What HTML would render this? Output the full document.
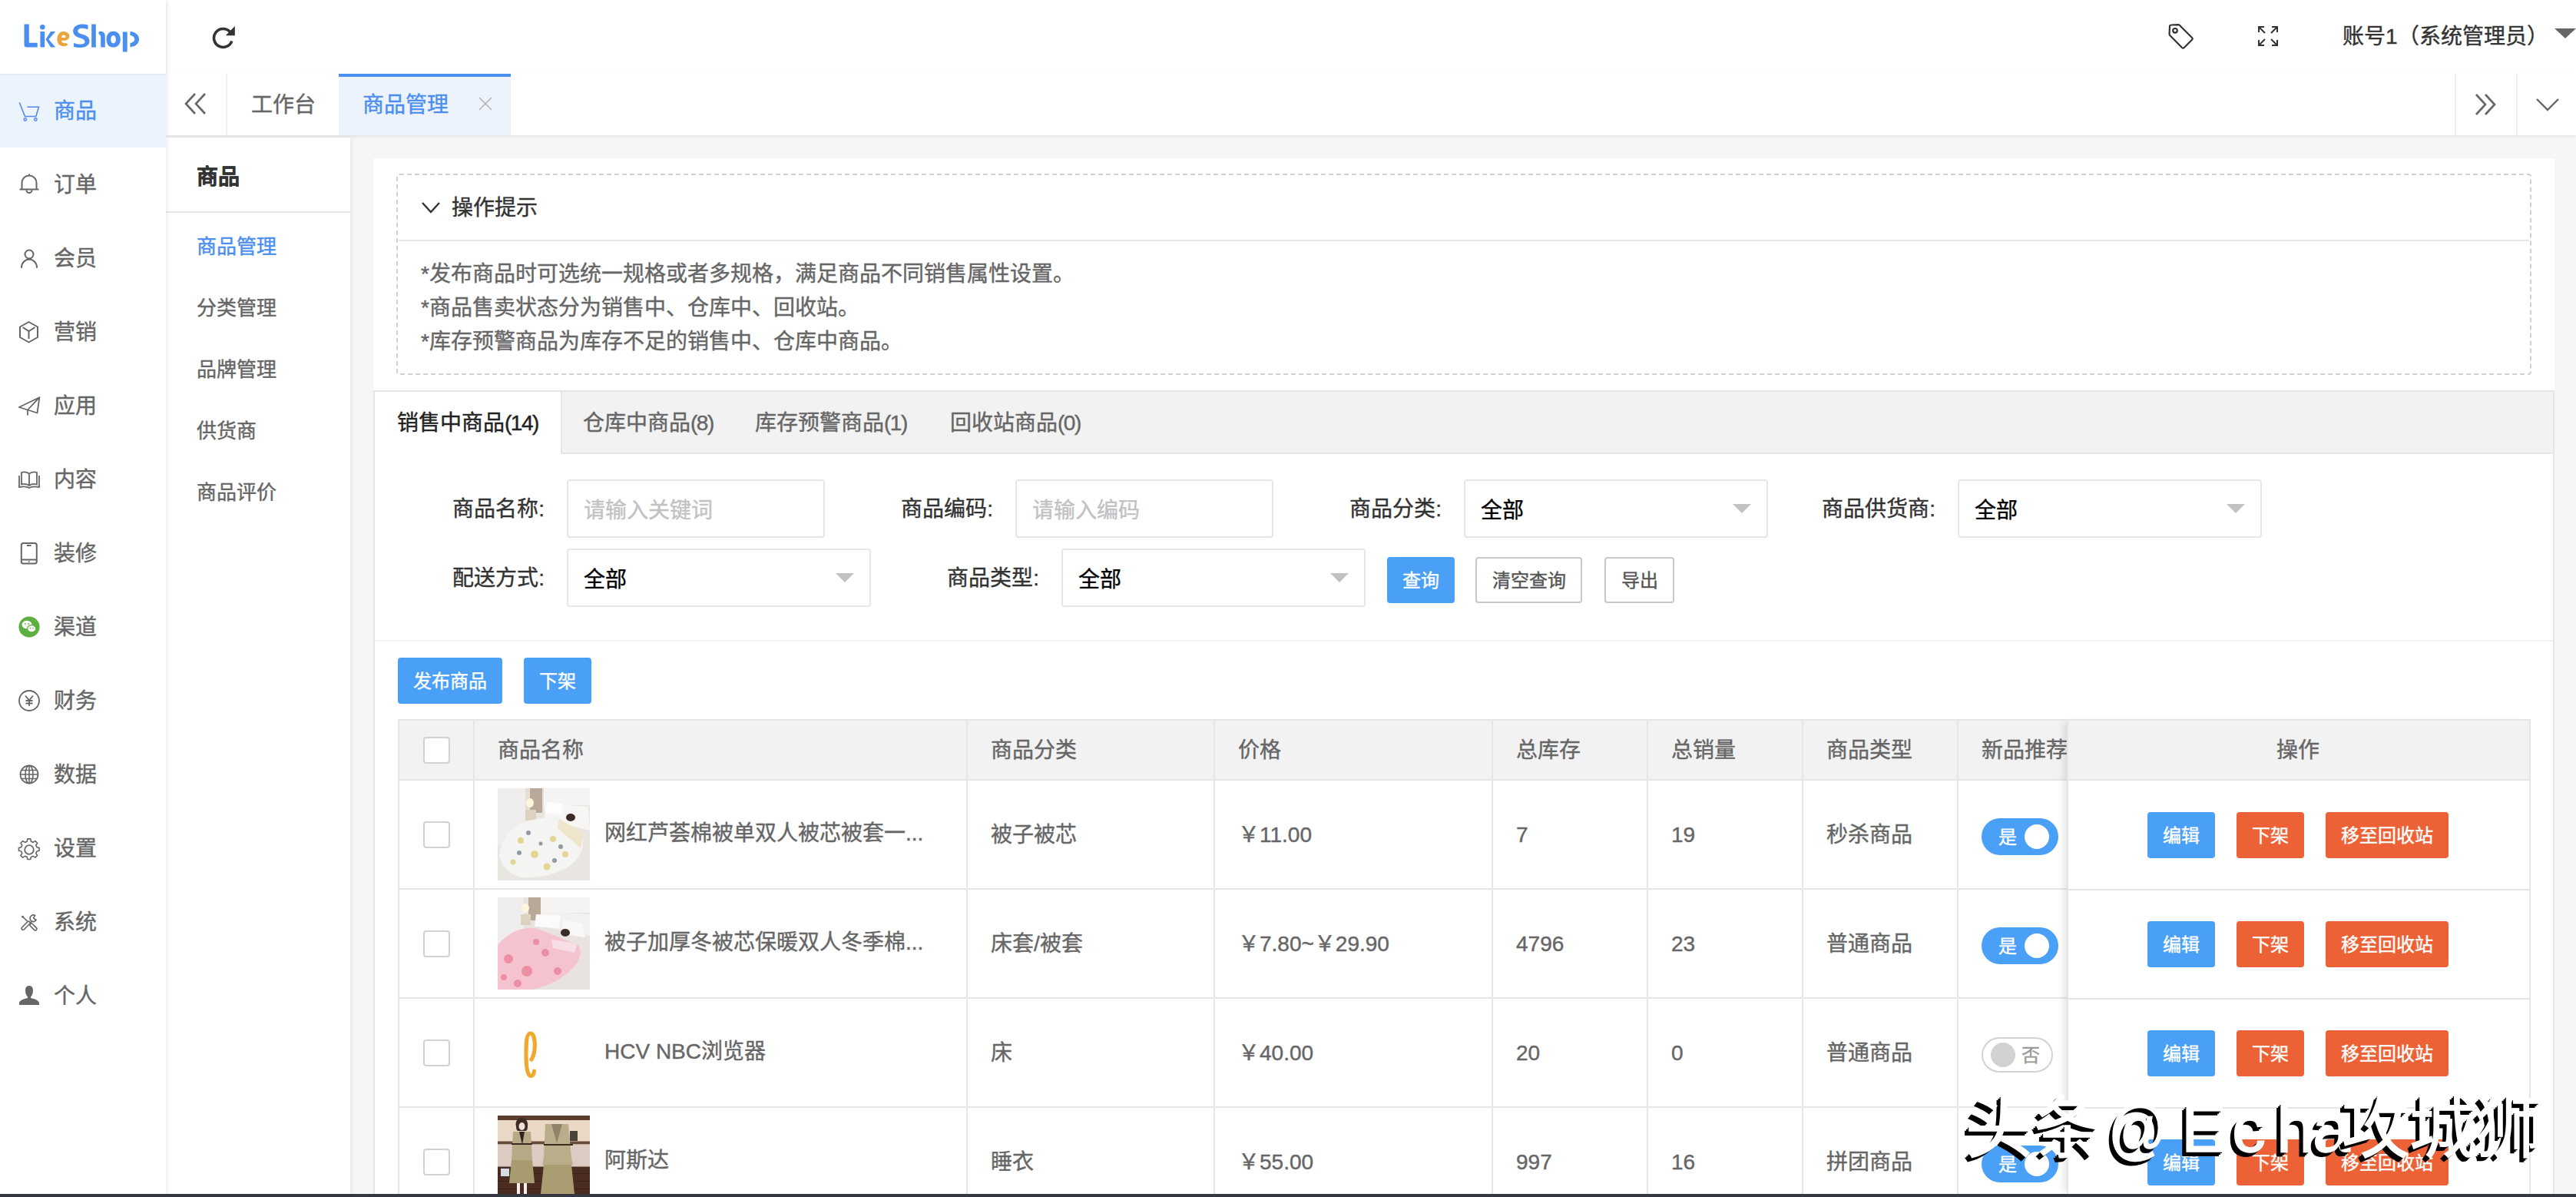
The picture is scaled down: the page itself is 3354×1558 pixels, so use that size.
<!DOCTYPE html>
<html lang="zh-CN"><head><meta charset="utf-8">
<style>
*{box-sizing:border-box;margin:0;padding:0}
html,body{width:3354px;height:1558px;overflow:hidden;background:#f6f6f6;font-family:"Liberation Sans",sans-serif;color:#666;-webkit-text-stroke-width:0.4px}
.a{position:absolute}
.t28{position:absolute;white-space:nowrap;font-size:28px;line-height:40px}
#side{position:absolute;left:0;top:0;width:216px;height:1558px;background:#fff;z-index:3;box-shadow:2px 0 6px rgba(0,0,0,.07)}
#logo{position:absolute;left:0;top:0;width:216px;height:96px;background:#fff;z-index:2;box-shadow:0 1px 3px rgba(0,0,0,.08)}
.mi{position:absolute;left:0;width:216px;height:96px}
.mi .t{position:absolute;left:70px;top:0;line-height:96px;font-size:28px;color:#666;white-space:nowrap}
.mi svg{position:absolute;left:24px;width:28px;height:28px;overflow:visible}
.mi.on{background:#ebf3fd}
.mi.on .t{color:#4a8ef0}
#header{position:absolute;left:216px;top:0;width:3138px;height:96px;background:#fff}
#tabbar{position:absolute;left:216px;top:96px;width:3138px;height:80px;background:#fff;box-shadow:0 2px 4px rgba(0,0,0,.08);z-index:2}
#side2{position:absolute;left:216px;top:179px;width:240px;height:1379px;background:#fff;box-shadow:2px 0 6px rgba(0,0,0,.06);z-index:1}
#bottombar{position:absolute;left:0;top:1554px;width:3354px;height:4px;background:#35393f;z-index:10}
#content{position:absolute;left:0;top:0;width:3354px;height:1558px}
.lbl{width:188px;text-align:right;color:#333;line-height:40px}
.inp{position:absolute;height:76px;border:2px solid #e6e6e6;border-radius:4px;background:#fff}
.inp span{position:absolute;left:20px;top:18px;font-size:28px;line-height:40px;white-space:nowrap;color:#000}
.inp span.ph{color:#c2c2c2}
.inp.sel i{position:absolute;right:20px;top:30px;width:0;height:0;border-left:12px solid transparent;border-right:12px solid transparent;border-top:12px solid #c2c2c2}
.btn{position:absolute;height:60px;border-radius:4px;font-size:24px;line-height:60px;text-align:center;white-space:nowrap}
.btn.blue{background:#4a9ff7;color:#fff}
.btn.red{background:#ec6236;color:#fff}
.btn.line{border:2px solid #c9c9c9;background:#fff;color:#555;line-height:56px}
.sw{position:absolute;height:48px;border-radius:24px}
.sw.on{width:100px;background:#4a9ff7}
.sw.on span{position:absolute;left:22px;top:4px;font-size:24px;line-height:40px;color:#fff}
.sw.on i{position:absolute;left:56px;top:8px;width:32px;height:32px;border-radius:50%;background:#fff}
.sw.off{width:93px;height:46px;border:2px solid #d2d2d2;background:#fff}
.sw.off i{position:absolute;left:10px;top:5px;width:32px;height:32px;border-radius:50%;background:#d2d2d2}
.sw.off span{position:absolute;left:50px;top:1px;font-size:24px;line-height:40px;color:#999}
#wm{position:absolute;left:2500px;top:1409px;width:854px;height:140px;z-index:20}
#wm span{position:absolute;top:0;font-size:88px;line-height:120px;color:#fff;white-space:nowrap;-webkit-text-stroke:1.5px #fff;text-shadow:-6px 6px 0 #000,-4px 4px 0 #000,-2px 2px 0 #000}
#wm span.at{transform:scaleX(0.86);transform-origin:0 0}

.ls{letter-spacing:-1.5px}

.t28,.mi .t,.inp span,.sw span,.tx{transform:translateY(1px)}
.btn{padding-top:2px;line-height:58px}
.btn.line{line-height:54px}

</style></head>
<body>
<div id="side">
  <div id="logo">
    <svg class="a" style="left:0;top:0" width="216" height="96" viewBox="0 0 216 96">
      <g fill="#4a8ef0">
        <path d="M31.5,31.5 H37.8 V55.8 H48.8 V61.6 H35 Q31.5,61.6 31.5,58 Z"/>
        <circle cx="55.3" cy="35.2" r="3.3"/>
        <rect x="52.4" y="41" width="5.8" height="20.6" rx="1"/>
        <path d="M72.2,41 L63.5,51.3 L72.2,61.6 H66 L59.5,51.3 L66,41 Z"/>
        <path d="M114.5,32.5 C111,31.5 107,31.3 104,31.8 C97.5,33 94.8,37 95.3,41.5 C95.8,46 99.5,48 104.5,49.5 C108.5,50.7 110.5,52 110.5,54.5 C110.5,57 107.5,57.8 104,57.6 C101,57.4 98,56.8 96,56 V61 C99,61.7 102,62 105,61.9 C112,61.7 116.5,58.6 116.5,53.5 C116.5,48.5 112.5,46.2 107.5,44.8 C103.5,43.7 101.3,42.6 101.3,40.3 C101.3,37.8 103.5,36.6 107,36.8 C109.5,36.9 112,37.5 114.5,38.2 Z"/>
        <rect x="119.2" y="31.5" width="5.6" height="30.1"/>
        <path d="M128.4,42.5 C128.4,40.5 131.5,40 134,41.5 C136,42.7 136.8,44.5 136.8,47 V61.6 H131.2 V48 C131.2,46.5 130.5,45.5 129.5,45 C128.8,44.6 128.4,43.8 128.4,42.5 Z"/>
        <path d="M147.5,40.8 C153.5,40.8 156.8,45.2 156.8,51.2 C156.8,57.2 153.5,61.6 147.5,61.6 C141.5,61.6 138.6,57.2 138.6,51.2 C138.6,45.2 141.5,40.8 147.5,40.8 Z M147.5,46 C145.2,46 144.3,48.2 144.3,51.2 C144.3,54.2 145.2,56.4 147.5,56.4 C149.8,56.4 150.9,54.2 150.9,51.2 C150.9,48.2 149.8,46 147.5,46 Z" fill-rule="evenodd"/>
        <rect x="159.8" y="41.5" width="5.9" height="26"/>
        <path d="M169.5,41 C176.5,41.5 181,45.5 181,51 C181,56.5 176.5,60.7 169.5,61.2 V56 C173,55.5 175.3,53.8 175.3,51 C175.3,48.2 173,46.5 169.5,46 Z"/>
      </g>
      <path d="M88.5,58.5 C85.5,60.5 80.5,61 77.5,58.5 C73.5,55 73.3,47 77.5,43 C81,39.8 87.5,40.5 89.8,44.8 C91.5,48.2 89.5,52.5 84,52.8 H80 C80.5,56 83.5,57 86.5,56 Z M80.2,49 H85 C86,49 86,46 83,45.5 C81,45.3 80.2,47 80.2,49 Z" fill="#eaa43a" fill-rule="evenodd"/>
    </svg>
  </div>
  <div class="mi on" style="top:96px"><svg viewBox="0 0 28 28" style="top:34px"><g transform="translate(0,1)"><path d="M1.5,3 L8.5,20.5 H22.8 L26.5,8.2 H12" fill="none" stroke="#5587e6" stroke-width="1.6" stroke-linejoin="round" stroke-linecap="round"/><circle cx="8.8" cy="24.5" r="1.7" fill="none" stroke="#5587e6" stroke-width="1.5"/><circle cx="22.3" cy="24.5" r="1.7" fill="none" stroke="#5587e6" stroke-width="1.5"/></g></svg><span class="t">商品</span></div>
<div class="mi" style="top:192px"><svg viewBox="0 0 28 28" style="top:34px"><path d="M4.5,20 V12 A9.5,9.5 0 0 1 23.5,12 V20" fill="none" stroke="#666" stroke-width="2"/><path d="M1.5,20.5 H26.5" stroke="#666" stroke-width="2"/><path d="M10.5,21.5 A3.5,3.5 0 0 0 17.5,21.5" fill="none" stroke="#666" stroke-width="2"/><path d="M14,0.5 V3" stroke="#666" stroke-width="2"/></svg><span class="t">订单</span></div>
<div class="mi" style="top:288px"><svg viewBox="0 0 28 28" style="top:34px"><circle cx="14" cy="9" r="5.5" fill="none" stroke="#666" stroke-width="2"/><path d="M4,26 A10.5,10.5 0 0 1 14,15.5 A10.5,10.5 0 0 1 24,26" fill="none" stroke="#666" stroke-width="2" stroke-linecap="round"/></svg><span class="t">会员</span></div>
<div class="mi" style="top:384px"><svg viewBox="0 0 28 28" style="top:34px"><path d="M13.5,1 L25,7.5 V21 L13.5,27.5 L2,21 V7.5 Z" fill="none" stroke="#666" stroke-width="2" stroke-linejoin="round"/><path d="M5.6,8 L13.5,13 L21.5,8 M13.5,13 V23" fill="none" stroke="#666" stroke-width="2"/></svg><span class="t">营销</span></div>
<div class="mi" style="top:480px"><svg viewBox="0 0 28 28" style="top:34px"><path d="M27.4,3.2 L0.8,16 L12,19.5 L24.5,23.5 Z M27.4,3.2 L12,19.5 V26.4" fill="none" stroke="#666" stroke-width="1.8" stroke-linejoin="round"/></svg><span class="t">应用</span></div>
<div class="mi" style="top:576px"><svg viewBox="0 0 28 28" style="top:34px"><path d="M14,6.5 C11,4.5 7,4 4,5 V20.5 C7,19.5 11,20 14,22 C17,20 21,19.5 24,20.5 V5 C21,4 17,4.5 14,6.5 Z M14,6.5 V22" fill="none" stroke="#666" stroke-width="1.8"/><path d="M1,9 V24 C6,23 11,23 14,25 C17,23 22,23 27,24 V9" fill="none" stroke="#666" stroke-width="1.8"/></svg><span class="t">内容</span></div>
<div class="mi" style="top:672px"><svg viewBox="0 0 28 28" style="top:34px"><rect x="3.8" y="1" width="20" height="26.5" rx="2.5" fill="none" stroke="#666" stroke-width="2"/><path d="M3.8,22.5 H23.8 M11,4 H16.5" stroke="#666" stroke-width="1.8"/><circle cx="13.8" cy="25" r="0.9" fill="#666"/></svg><span class="t">装修</span></div>
<div class="mi" style="top:768px"><svg viewBox="0 0 28 28" style="top:34px"><circle cx="14" cy="14" r="13.6" fill="#5daf3f"/><ellipse cx="11" cy="11" rx="6.5" ry="5.2" fill="#fff"/><ellipse cx="17.2" cy="16.2" rx="5.6" ry="4.6" fill="#fff" stroke="#5daf3f" stroke-width="1.2"/><circle cx="8.8" cy="10" r="0.9" fill="#5daf3f"/><circle cx="13" cy="10" r="0.9" fill="#5daf3f"/><circle cx="15.5" cy="15.6" r="0.8" fill="#5daf3f"/><circle cx="19" cy="15.6" r="0.8" fill="#5daf3f"/></svg><span class="t">渠道</span></div>
<div class="mi" style="top:864px"><svg viewBox="0 0 28 28" style="top:34px"><circle cx="14" cy="14" r="13" fill="none" stroke="#666" stroke-width="1.8"/><path d="M9,7.5 L14,13.5 L19,7.5 M14,13.5 V21 M9.5,14 H18.5 M9.5,17.5 H18.5" fill="none" stroke="#666" stroke-width="1.8"/></svg><span class="t">财务</span></div>
<div class="mi" style="top:960px"><svg viewBox="0 0 28 28" style="top:34px"><circle cx="14" cy="14" r="11.5" fill="none" stroke="#666" stroke-width="1.8"/><ellipse cx="14" cy="14" rx="5" ry="11.5" fill="none" stroke="#666" stroke-width="1.6"/><path d="M14,2.5 V25.5 M2.5,14 H25.5 M4.5,8.5 H23.5 M4.5,19.5 H23.5" stroke="#666" stroke-width="1.6"/></svg><span class="t">数据</span></div>
<div class="mi" style="top:1056px"><svg viewBox="0 0 28 28" style="top:36px"><path d="M12,1.5 H16 L16.8,5 L19.6,6.2 L22.6,4.3 L25.4,7.1 L23.5,10.1 L24.7,12.9 L28,13.8 V17.6 L24.7,18.4 L23.5,21.2 L25.4,24.2 L22.6,27 L19.6,25.1 L16.8,26.3 L16,29.5 H12 L11.2,26.3 L8.4,25.1 L5.4,27 L2.6,24.2 L4.5,21.2 L3.3,18.4 L0,17.6 V13.8 L3.3,12.9 L4.5,10.1 L2.6,7.1 L5.4,4.3 L8.4,6.2 L11.2,5 Z" transform="translate(0.5,-1.5) scale(0.95)" fill="none" stroke="#666" stroke-width="1.7" stroke-linejoin="round"/><circle cx="14" cy="14" r="5.8" fill="none" stroke="#666" stroke-width="1.8"/></svg><span class="t">设置</span></div>
<div class="mi" style="top:1152px"><svg viewBox="0 0 28 28" style="top:34px"><path d="M5.5,7.2 L11.5,13" stroke="#666" stroke-width="1.6" fill="none"/><circle cx="5.5" cy="7.2" r="1.4" fill="#666"/><path d="M13.2,15.2 L6,22.4" stroke="#666" stroke-width="5.4" stroke-linecap="round" fill="none"/><path d="M13.2,15.2 L6,22.4" stroke="#fff" stroke-width="2.2" stroke-linecap="round" fill="none"/><path d="M16.8,17.8 L22,23" stroke="#666" stroke-width="5.4" stroke-linecap="round" fill="none"/><path d="M16.8,17.8 L22,23" stroke="#fff" stroke-width="2.2" stroke-linecap="round" fill="none"/><path d="M23.2,11.2 A4.3,4.3 0 1 1 21.6,5.6 L19.6,8.6 L21.4,10.6 Z" fill="none" stroke="#666" stroke-width="1.7" stroke-linejoin="round"/><path d="M17,13.5 L15.5,15.5" stroke="#666" stroke-width="1.6"/></svg><span class="t">系统</span></div>
<div class="mi" style="top:1248px"><svg viewBox="0 0 28 28" style="top:34px"><path d="M14,1 C10,1 9,4 9,7.5 C9,11 10.5,14 12,15.5 V17 C7,18 2,20 1,23 V26 H27 V23 C26,20 21,18 16,17 V15.5 C17.5,14 19,11 19,7.5 C19,4 18,1 14,1 Z" fill="#666"/></svg><span class="t">个人</span></div>
</div>
<div id="header">
  <svg class="a" style="left:60px;top:32px" width="32" height="32" viewBox="0 0 32 32">
    <path d="M25.8,21.5 A12,12 0 1 1 23.5,9.5" fill="none" stroke="#333" stroke-width="3.6"/>
    <path d="M29.8,2 V14.2 H17.8 Z" fill="#333"/>
  </svg>
  <!-- tag icon -->
  <svg class="a" style="left:2606px;top:30px" width="36" height="36" viewBox="0 0 36 36">
    <path d="M3,4.5 Q3,2.5 5,2.5 L14,2.2 Q15.2,2.2 16,3 L32,19 Q33.4,20.4 32,21.8 L21.8,32 Q20.4,33.4 19,32 L3.2,16 Q2.5,15.3 2.6,14 Z" fill="none" stroke="#333" stroke-width="2.2" stroke-linejoin="round"/>
    <circle cx="10" cy="9.8" r="2.8" fill="none" stroke="#333" stroke-width="2.2"/>
  </svg>
  <!-- fullscreen icon -->
  <svg class="a" style="left:2722px;top:32px" width="30" height="30" viewBox="0 0 30 30">
    <path d="M3,10 V3 H10 M3,3 L11,11 M20,3 H27 V10 M27,3 L19,11 M3,20 V27 H10 M3,27 L11,19 M27,20 V27 H20 M27,27 L19,19" fill="none" stroke="#333" stroke-width="2"/>
  </svg>
  <div class="t28" style="left:2834px;top:27px;color:#333">账号1（系统管理员）</div>
  <svg class="a" style="left:3110px;top:36px" width="30" height="16" viewBox="0 0 30 16"><path d="M0,1 H28 L14,14 Z" fill="#666"/></svg>
</div>
<div id="tabbar">
  <svg class="a" style="left:24px;top:24px" width="30" height="32" viewBox="0 0 30 32"><path d="M14,2 L2,15 L14,28 M27,2 L15,15 L27,28" fill="none" stroke="#666" stroke-width="2.6"/></svg>
  <div class="a" style="left:78px;top:0;width:2px;height:80px;background:#f0f0f0"></div>
  <div class="t28" style="left:111px;top:20px;color:#666">工作台</div>
  <div class="a" style="left:225px;top:0;width:224px;height:80px;background:#ecf3fd;border-top:4px solid #4a8ef0"></div>
  <div class="t28" style="left:256px;top:20px;color:#4a8ef0">商品管理</div>
  <svg class="a" style="left:407px;top:30px" width="18" height="18" viewBox="0 0 18 18"><path d="M1,1 L17,17 M17,1 L1,17" stroke="#b3b3b3" stroke-width="1.6"/></svg>
  <div class="a" style="left:2980px;top:0;width:2px;height:80px;background:#f0f0f0"></div>
  <div class="a" style="left:3060px;top:0;width:2px;height:80px;background:#f0f0f0"></div>
  <svg class="a" style="left:3006px;top:26px" width="28" height="28" viewBox="0 0 28 28"><path d="M2,1 L14,14 L2,27 M14,1 L26,14 L14,27" fill="none" stroke="#666" stroke-width="2.6"/></svg>
  <svg class="a" style="left:3086px;top:31px" width="30" height="18" viewBox="0 0 30 18"><path d="M1,2 L15,16 L29,2" fill="none" stroke="#666" stroke-width="2.4"/></svg>
</div>
<div id="side2">
  <div class="a tx" style="left:40px;top:31px;font-size:28px;line-height:40px;font-weight:bold;color:#333;white-space:nowrap">商品</div>
  <div class="a" style="left:0;top:96px;width:240px;height:2px;background:#e8e8e8"></div>
  <div class="a tx" style="left:40px;top:123px;font-size:26px;line-height:36px;color:#4a8ef0;white-space:nowrap">商品管理</div>
  <div class="a tx" style="left:40px;top:203px;font-size:26px;line-height:36px;color:#666;white-space:nowrap">分类管理</div>
  <div class="a tx" style="left:40px;top:283px;font-size:26px;line-height:36px;color:#666;white-space:nowrap">品牌管理</div>
  <div class="a tx" style="left:40px;top:363px;font-size:26px;line-height:36px;color:#666;white-space:nowrap">供货商</div>
  <div class="a tx" style="left:40px;top:443px;font-size:26px;line-height:36px;color:#666;white-space:nowrap">商品评价</div>
</div>
<div id="content">
  <!-- card 1 tips -->
  <div class="a" style="left:486px;top:206px;width:2840px;height:302px;background:#fff"></div>
  <div class="a" style="left:516px;top:226px;width:2780px;height:262px;border:2px dashed #d0d0d0;border-radius:4px"></div>
  <div class="a" style="left:519px;top:312px;width:2774px;height:2px;background:#e8e8e8"></div>
  <svg class="a" style="left:548px;top:261px" width="26" height="18" viewBox="0 0 26 18"><path d="M2,3 L13,15 L24,3" fill="none" stroke="#333" stroke-width="2.4"/></svg>
  <div class="t28" style="left:588px;top:250px;color:#333">操作提示</div>
  <div class="a tx" style="left:548px;top:334px;font-size:28px;line-height:44px;color:#666;white-space:nowrap">*发布商品时可选统一规格或者多规格，满足商品不同销售属性设置。<br>*商品售卖状态分为销售中、仓库中、回收站。<br>*库存预警商品为库存不足的销售中、仓库中商品。</div>

  <!-- card 2 -->
  <div class="a" style="left:486px;top:508px;width:2840px;height:1050px;background:#fff;border:2px solid #e6e6e6;border-bottom:none"></div>
  <div class="a" style="left:488px;top:510px;width:2836px;height:81px;background:#f2f2f2;border-bottom:2px solid #e6e6e6"></div>
  <div class="a" style="left:488px;top:510px;width:244px;height:81px;background:#fff;border-right:2px solid #e6e6e6"></div>
  <div class="t28" style="left:517px;top:530px;color:#222">销售中商品<span class="ls">(14)</span></div>
  <div class="t28" style="left:759px;top:530px;color:#666">仓库中商品<span class="ls">(8)</span></div>
  <div class="t28" style="left:983px;top:530px;color:#666">库存预警商品<span class="ls">(1)</span></div>
  <div class="t28" style="left:1237px;top:530px;color:#666">回收站商品<span class="ls">(0)</span></div>

  <!-- form -->
  <div class="t28 lbl" style="left:521px;top:642px">商品名称:</div>
  <div class="inp" style="left:738px;top:624px;width:336px"><span class="ph">请输入关键词</span></div>
  <div class="t28 lbl" style="left:1105px;top:642px">商品编码:</div>
  <div class="inp" style="left:1322px;top:624px;width:336px"><span class="ph">请输入编码</span></div>
  <div class="t28 lbl" style="left:1689px;top:642px">商品分类:</div>
  <div class="inp sel" style="left:1906px;top:624px;width:396px"><span>全部</span><i></i></div>
  <div class="t28 lbl" style="left:2332px;top:642px">商品供货商:</div>
  <div class="inp sel" style="left:2549px;top:624px;width:396px"><span>全部</span><i></i></div>

  <div class="t28 lbl" style="left:521px;top:732px">配送方式:</div>
  <div class="inp sel" style="left:738px;top:714px;width:396px"><span>全部</span><i></i></div>
  <div class="t28 lbl" style="left:1165px;top:732px">商品类型:</div>
  <div class="inp sel" style="left:1382px;top:714px;width:396px"><span>全部</span><i></i></div>
  <div class="btn blue" style="left:1806px;top:725px;width:88px">查询</div>
  <div class="btn line" style="left:1921px;top:725px;width:139px">清空查询</div>
  <div class="btn line" style="left:2089px;top:725px;width:91px">导出</div>
  <div class="a" style="left:488px;top:833px;width:2836px;height:2px;background:#f2f2f2"></div>

  <div class="btn blue" style="left:518px;top:856px;width:136px">发布商品</div>
  <div class="btn blue" style="left:682px;top:856px;width:88px">下架</div>

  <div class="a" style="left:518px;top:936px;width:2777px;height:622px;background:#fff"></div>
<div class="a" style="left:520px;top:938px;width:2773px;height:76px;background:#f2f2f2"></div>
<div class="a" style="left:518px;top:936px;width:2777px;height:2px;background:#e6e6e6;"></div>
<div class="a" style="left:518px;top:936px;width:2px;height:622px;background:#e6e6e6;"></div>
<div class="a" style="left:3293px;top:936px;width:2px;height:622px;background:#e6e6e6;"></div>
<div class="a" style="left:518px;top:1014px;width:2777px;height:2px;background:#e6e6e6;"></div>
<div class="a" style="left:518px;top:1156px;width:2777px;height:2px;background:#e6e6e6;"></div>
<div class="a" style="left:518px;top:1298px;width:2777px;height:2px;background:#e6e6e6;"></div>
<div class="a" style="left:518px;top:1440px;width:2777px;height:2px;background:#e6e6e6;"></div>
<div class="a" style="left:616px;top:936px;width:2px;height:622px;background:#e6e6e6;"></div>
<div class="a" style="left:1258px;top:936px;width:2px;height:622px;background:#e6e6e6;"></div>
<div class="a" style="left:1580px;top:936px;width:2px;height:622px;background:#e6e6e6;"></div>
<div class="a" style="left:1942px;top:936px;width:2px;height:622px;background:#e6e6e6;"></div>
<div class="a" style="left:2144px;top:936px;width:2px;height:622px;background:#e6e6e6;"></div>
<div class="a" style="left:2346px;top:936px;width:2px;height:622px;background:#e6e6e6;"></div>
<div class="a" style="left:2548px;top:936px;width:2px;height:622px;background:#e6e6e6;"></div>
<div class="a" style="left:551px;top:959px;width:35px;height:35px;border:2px solid #d2d2d2;border-radius:4px;background:#fff"></div>
<div class="t28" style="left:648px;top:956px;color:#666;font-size:28px;">商品名称</div>
<div class="t28" style="left:1290px;top:956px;color:#666;font-size:28px;">商品分类</div>
<div class="t28" style="left:1612px;top:956px;color:#666;font-size:28px;">价格</div>
<div class="t28" style="left:1974px;top:956px;color:#666;font-size:28px;">总库存</div>
<div class="t28" style="left:2176px;top:956px;color:#666;font-size:28px;">总销量</div>
<div class="t28" style="left:2378px;top:956px;color:#666;font-size:28px;">商品类型</div>
<div class="t28" style="left:2580px;top:956px;color:#666;font-size:28px;">新品推荐</div>
<div class="a" style="left:551px;top:1069px;width:35px;height:35px;border:2px solid #d2d2d2;border-radius:4px;background:#fff"></div>
<div class="a" style="left:648px;top:1026px;width:120px;height:120px;overflow:hidden"><svg width="120" height="120" viewBox="0 0 120 120"><rect width="120" height="120" fill="#e9e5e1"/><rect x="0" y="0" width="36" height="75" fill="#f0eeec"/><rect x="36" y="0" width="24" height="30" fill="#e6dfd8"/><rect x="42" y="0" width="16" height="32" fill="#baa998"/><rect x="60" y="0" width="60" height="22" fill="#f5f4f3"/><ellipse cx="42" cy="19" rx="5" ry="6" fill="#fff6dc"/><rect x="36" y="28" width="14" height="14" fill="#ddd2c0"/><path d="M60,20 L118,24 L120,55 L62,40 Z" fill="#f7f6f5"/><path d="M64,18 L84,20 L83,34 L63,32 Z" fill="#fdfdfd"/><path d="M2,88 Q5,55 40,42 L75,36 Q100,48 110,62 Q115,85 95,100 Q70,118 30,116 Q8,110 2,88 Z" fill="#f4f4f2"/><g fill="#e5d593"><circle cx="30" cy="68" r="4"/><circle cx="48" cy="86" r="5"/><circle cx="72" cy="66" r="4"/><circle cx="64" cy="102" r="4.5"/><circle cx="88" cy="86" r="4"/><circle cx="20" cy="96" r="3.5"/></g><g fill="#8f9aa6"><circle cx="40" cy="58" r="3"/><circle cx="82" cy="76" r="3"/><circle cx="28" cy="84" r="3"/><circle cx="56" cy="72" r="2.5"/><circle cx="74" cy="94" r="3"/></g><ellipse cx="95" cy="38" rx="6" ry="5" fill="#3b2c27"/><path d="M80,40 L112,58 L108,78 L78,52 Z" fill="#efe5cc"/></svg></div>
<div class="t28" style="left:787px;top:1064px;color:#666;font-size:28px;">网红芦荟棉被单双人被芯被套一...</div>
<div class="t28" style="left:1290px;top:1066px;color:#666;font-size:28px;">被子被芯</div>
<div class="t28" style="left:1612px;top:1066px;color:#666;font-size:28px;">￥11.00</div>
<div class="t28" style="left:1974px;top:1066px;color:#666;font-size:28px;">7</div>
<div class="t28" style="left:2176px;top:1066px;color:#666;font-size:28px;">19</div>
<div class="t28" style="left:2378px;top:1066px;color:#666;font-size:28px;">秒杀商品</div>
<div class="sw on" style="left:2580px;top:1065px"><span>是</span><i></i></div>
<div class="a" style="left:551px;top:1211px;width:35px;height:35px;border:2px solid #d2d2d2;border-radius:4px;background:#fff"></div>
<div class="a" style="left:648px;top:1168px;width:120px;height:120px;overflow:hidden"><svg width="120" height="120" viewBox="0 0 120 120"><rect width="120" height="120" fill="#e8e3df"/><rect x="0" y="0" width="34" height="65" fill="#f0eeec"/><rect x="40" y="0" width="16" height="30" fill="#b9a999"/><rect x="56" y="0" width="64" height="20" fill="#f5f4f3"/><ellipse cx="36" cy="14" rx="5" ry="6" fill="#fff6dc"/><rect x="30" y="22" width="13" height="14" fill="#ddd2c0"/><path d="M56,18 L120,22 L120,50 L58,38 Z" fill="#f2f1f0"/><path d="M50,22 L82,24 L80,40 L48,38 Z" fill="#fbfbfb"/><path d="M84,30 L110,34 L114,52 L86,48 Z" fill="#f8f8f8"/><path d="M0,62 Q20,38 50,40 L105,62 Q112,75 100,90 Q80,112 45,120 L0,120 Z" fill="#f5c3cf"/><g fill="#ec8ea1"><circle cx="14" cy="80" r="6"/><circle cx="38" cy="96" r="7"/><circle cx="62" cy="72" r="5"/><circle cx="26" cy="112" r="5"/><circle cx="78" cy="96" r="5"/><circle cx="50" cy="58" r="4"/><circle cx="8" cy="104" r="4"/></g><ellipse cx="88" cy="46" rx="6" ry="5" fill="#3b2c27"/><path d="M70,55 L104,60 L100,72 L72,66 Z" fill="#f8dfe6"/></svg></div>
<div class="t28" style="left:787px;top:1206px;color:#666;font-size:28px;">被子加厚冬被芯保暖双人冬季棉...</div>
<div class="t28" style="left:1290px;top:1208px;color:#666;font-size:28px;">床套/被套</div>
<div class="t28" style="left:1612px;top:1208px;color:#666;font-size:28px;">￥7.80~￥29.90</div>
<div class="t28" style="left:1974px;top:1208px;color:#666;font-size:28px;">4796</div>
<div class="t28" style="left:2176px;top:1208px;color:#666;font-size:28px;">23</div>
<div class="t28" style="left:2378px;top:1208px;color:#666;font-size:28px;">普通商品</div>
<div class="sw on" style="left:2580px;top:1207px"><span>是</span><i></i></div>
<div class="a" style="left:551px;top:1353px;width:35px;height:35px;border:2px solid #d2d2d2;border-radius:4px;background:#fff"></div>
<div class="a" style="left:648px;top:1310px;width:120px;height:120px;overflow:hidden"><svg width="120" height="120" viewBox="0 0 120 120"><rect width="120" height="120" fill="#fff"/><path d="M44,69 C50,60 50,35 42.5,35 C37,35 37,50 37,63 C37,80 39,90.5 43,90.5 C45.5,90.5 47,88 47.5,84" fill="none" stroke="#f0a92f" stroke-width="5.2" stroke-linecap="round"/></svg></div>
<div class="t28" style="left:787px;top:1348px;color:#666;font-size:28px;">HCV NBC浏览器</div>
<div class="t28" style="left:1290px;top:1350px;color:#666;font-size:28px;">床</div>
<div class="t28" style="left:1612px;top:1350px;color:#666;font-size:28px;">￥40.00</div>
<div class="t28" style="left:1974px;top:1350px;color:#666;font-size:28px;">20</div>
<div class="t28" style="left:2176px;top:1350px;color:#666;font-size:28px;">0</div>
<div class="t28" style="left:2378px;top:1350px;color:#666;font-size:28px;">普通商品</div>
<div class="sw off" style="left:2580px;top:1350px"><i></i><span>否</span></div>
<div class="a" style="left:551px;top:1495px;width:35px;height:35px;border:2px solid #d2d2d2;border-radius:4px;background:#fff"></div>
<div class="a" style="left:648px;top:1452px;width:120px;height:120px;overflow:hidden"><svg width="120" height="120" viewBox="0 0 120 120"><rect width="120" height="120" fill="#d9c9bd"/><rect x="0" y="0" width="120" height="6" fill="#5b3b2b"/><rect x="0" y="6" width="120" height="28" fill="#ead8c6"/><rect x="0" y="33.5" width="120" height="4" fill="#6a4a38"/><rect x="0" y="37.5" width="120" height="29" fill="#dccbc2"/><rect x="0" y="66.5" width="120" height="54" fill="#4a2d20"/><rect x="0" y="75" width="120" height="1" fill="#3a2218"/><rect x="0" y="85" width="120" height="1" fill="#3a2218"/><rect x="0" y="95" width="120" height="1" fill="#3a2218"/><path d="M24,14 C22,6 28,3 31,3 C36,3 40,7 39,14 C39,18 38,20 36,20 L27,20 C25,20 24,18 24,14 Z" fill="#3d2c26"/><ellipse cx="31.5" cy="14" rx="4" ry="5" fill="#f0dfd6"/><path d="M20,21 L43,21 L45,58 L18,58 Z" fill="#b6aa86"/><path d="M28,21 L35,21 L32,38 Z" fill="#2e2520"/><rect x="18" y="36" width="27" height="2" fill="#3a2c22"/><path d="M18,58 L45,58 L48,88 L15,88 Z" fill="#a99b70"/><rect x="25" y="88" width="4" height="14" fill="#f4efe8"/><rect x="34" y="88" width="4" height="14" fill="#f4efe8"/><rect x="4" y="69" width="11" height="10" fill="#d4dde0"/><path d="M62,11 L92,11 L96,55 L98,64 L58,64 L60,55 Z" fill="#baae8a"/><path d="M70,11 L84,11 L77,36 Z" fill="#8f8468"/><rect x="60" y="37" width="38" height="2" fill="#3a2c22"/><path d="M60,64 L96,64 L100,102 L56,102 Z" fill="#aa9d72"/><rect x="94" y="20" width="10" height="13" fill="#4d4238"/></svg></div>
<div class="t28" style="left:787px;top:1490px;color:#666;font-size:28px;">阿斯达</div>
<div class="t28" style="left:1290px;top:1492px;color:#666;font-size:28px;">睡衣</div>
<div class="t28" style="left:1612px;top:1492px;color:#666;font-size:28px;">￥55.00</div>
<div class="t28" style="left:1974px;top:1492px;color:#666;font-size:28px;">997</div>
<div class="t28" style="left:2176px;top:1492px;color:#666;font-size:28px;">16</div>
<div class="t28" style="left:2378px;top:1492px;color:#666;font-size:28px;">拼团商品</div>
<div class="sw on" style="left:2580px;top:1491px"><span>是</span><i></i></div>
<div class="a" style="left:2691px;top:936px;width:604px;height:622px;background:#fff;box-shadow:-8px 0 10px -6px rgba(0,0,0,.14);border-top:2px solid #e6e6e6;border-right:2px solid #e6e6e6;border-left:2px solid #e6e6e6"></div>
<div class="a" style="left:2691px;top:938px;width:602px;height:78px;background:#f2f2f2;border-bottom:2px solid #e6e6e6;border-left:2px solid #e6e6e6"></div>
<div class="a" style="left:2691px;top:1157px;width:602px;height:2px;background:#e6e6e6;"></div>
<div class="a" style="left:2691px;top:1299px;width:602px;height:2px;background:#e6e6e6;"></div>
<div class="a" style="left:2691px;top:1441px;width:602px;height:2px;background:#e6e6e6;"></div>
<div class="t28" style="left:2964px;top:956px;color:#666;font-size:28px;">操作</div>
<div class="btn blue" style="left:2796px;top:1057px;width:88px">编辑</div>
<div class="btn red" style="left:2912px;top:1057px;width:88px">下架</div>
<div class="btn red" style="left:3028px;top:1057px;width:160px">移至回收站</div>
<div class="btn blue" style="left:2796px;top:1199px;width:88px">编辑</div>
<div class="btn red" style="left:2912px;top:1199px;width:88px">下架</div>
<div class="btn red" style="left:3028px;top:1199px;width:160px">移至回收站</div>
<div class="btn blue" style="left:2796px;top:1341px;width:88px">编辑</div>
<div class="btn red" style="left:2912px;top:1341px;width:88px">下架</div>
<div class="btn red" style="left:3028px;top:1341px;width:160px">移至回收站</div>
<div class="btn blue" style="left:2796px;top:1483px;width:88px">编辑</div>
<div class="btn red" style="left:2912px;top:1483px;width:88px">下架</div>
<div class="btn red" style="left:3028px;top:1483px;width:160px">移至回收站</div>
</div>

<div id="bottombar"></div>
<div id="wm"><span style="left:59px">头</span><span style="left:148px">条</span><span style="left:245px" class=at>@</span><span style="left:340px">E</span><span style="left:406px">c</span><span style="left:464px">h</span><span style="left:511px">a</span><span style="left:549px">攻</span><span style="left:637px">城</span><span style="left:723px">狮</span></div>

</body></html>
